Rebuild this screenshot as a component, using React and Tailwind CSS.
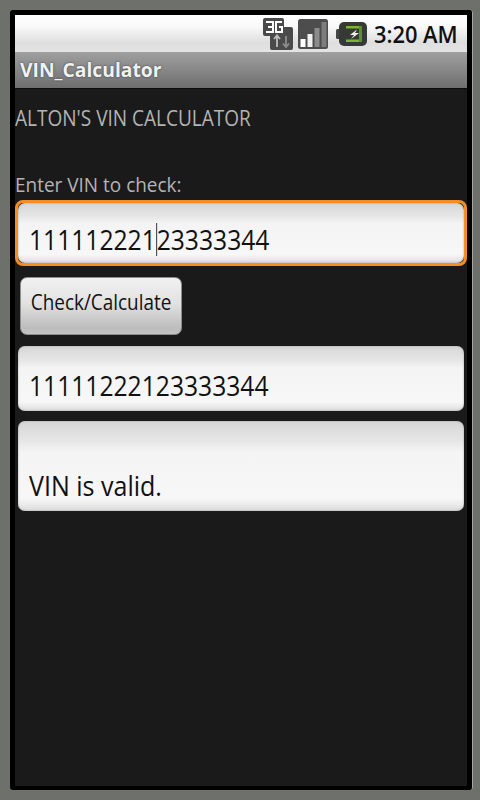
const font = { fontFamily: '"Open Sans","Noto Sans",sans-serif' };

function ThreeG() {
  return (
    <svg width="32" height="34" viewBox="0 0 32 34" className="block">
      <path d="M1 3a2 2 0 0 1 2-2h17a2 2 0 0 1 2 2v7h7a2 2 0 0 1 2 2v19a2 2 0 0 1-2 2H10a2 2 0 0 1-2-2V19H3a2 2 0 0 1-2-2z" fill="#4a4a4a" />
      <path d="M4 5h7v10H4M6 10h5" fill="none" stroke="#fff" strokeWidth="2" />
      <path d="M20 5h-6v10h6v-5h-3" fill="none" stroke="#fff" strokeWidth="2" />
      <path d="M15 30v-11M12 22l3-3.500 3 3.500" fill="none" stroke="#bdbdbd" strokeWidth="1.800" />
      <path d="M24 19v11M21 26.500l3 3.500 3-3.500" fill="none" stroke="#8d8d8d" strokeWidth="1.800" />
    </svg>
  );
}

function Signal() {
  return (
    <svg width="32" height="32" viewBox="0 0 32 32" className="block">
      <rect x="1" y="1" width="30" height="30" rx="2.500" fill="#4d4d4d" />
      <rect x="3.500" y="21" width="5" height="8" fill="#fff" />
      <rect x="10.500" y="16" width="5" height="13" fill="#f2f2f2" />
      <rect x="17.500" y="10" width="5" height="19" fill="#8b8b8b" />
      <rect x="24.500" y="4" width="5" height="25" fill="#7d7d7d" />
    </svg>
  );
}

function Battery() {
  return (
    <svg width="31" height="26" viewBox="0 0 31 26" className="block">
      <rect x="0" y="8" width="4" height="10" rx="1.500" fill="#444" />
      <rect x="3" y="1" width="28" height="24" rx="5" fill="#353a36" />
      <path d="M10 5h15v2.500H10zM10 18.500h15V21H10z" fill="#7fb235" />
      <path d="M23 5h3v16h-3z" fill="#5f8f2b" />
      <path d="M21 8.500l-7 5.500h4l-3 4 8-6h-4l2-3.500z" fill="#f4f4f4" />
    </svg>
  );
}

const fieldBg = "rounded-[7px] bg-[linear-gradient(#d6d6d6_0,#e6e6e6_22%,#f4f4f5_34%,#f7f7f8_86%,#e8e8e8_94%,#dadada_100%)] shadow-[inset_0_0_2px_#9a9a9a]";

export default function App() {
  return (
    <div style={font} className="h-[800px] w-[480px] overflow-hidden bg-[#6e706b] pl-[10px] pt-[10px]">
      <div className="h-[780px] w-[463px] rounded-[3px] border-r border-r-[#a5a7a3] bg-black pb-[4px] pl-[5px] pr-[5px] pt-[5px]">
        <div className="flex h-[771px] w-[452px] flex-col bg-[#1a1a1a]">
          <div className="flex h-[37px] shrink-0 items-center justify-end bg-[linear-gradient(#ffffff_0,#fafafa_30%,#dedede_75%,#e4e4e4_100%)]">
            <div className="mr-[3px]"><ThreeG /></div>
            <div className="mr-[7px]"><Signal /></div>
            <div className="mr-[7px]"><Battery /></div>
            <span className="mr-[10px] w-[83px] whitespace-nowrap text-[24px] font-semibold leading-[32px] text-[#111]">
              <span className="inline-block origin-left scale-x-[0.91]">3:20 AM</span>
            </span>
          </div>
          <div className="flex h-[36px] shrink-0 items-center bg-[linear-gradient(#a0a0a0,#6e6e6e)] pl-[5px] text-[19.300px] font-bold text-[#f2f2f2] [text-shadow:0_0_2px_#333]">
            VIN_Calculator
          </div>
          <div className="h-[1px] shrink-0 bg-[#0c0c0c]" />
          <div className="flex flex-col">
            <div className="mt-[14px] whitespace-nowrap text-[22px] leading-[28px] text-[#b4b4b4]">
              <span className="inline-block origin-left scale-x-[0.865]">ALTON'S VIN CALCULATOR</span>
            </div>
            <div className="mt-[40px] whitespace-nowrap text-[20.500px] leading-[26px] text-[#b4b4b4]">
              <span className="inline-block origin-left scale-x-[0.925]">Enter VIN to check:</span>
            </div>
            <div className="mt-[3px] rounded-[8px] border-[3px] border-[#f78d20]">
              <div className={`flex h-[60px] items-center whitespace-nowrap pl-[11px] pt-[13px] text-[27.500px] leading-[36px] text-[#111] ${fieldBg}`}>
                <span className="inline-flex origin-left scale-x-[0.896] items-center">
                  <span>111112221</span>
                  <span className="h-[33px] w-[1px] bg-[#222]" />
                  <span>23333344</span>
                </span>
              </div>
            </div>
            <button className="ml-[5px] mt-[11px] flex h-[58px] w-[162px] items-center justify-center rounded-[7px] border border-[#8d8d8d] bg-[linear-gradient(#f1f1f1,#e2e2e2_45%,#bcbcbc_90%,#c5c5c5)] pb-[6px] text-[21px] text-[#111]">
              <span className="inline-block scale-x-[0.9] whitespace-nowrap">Check/Calculate</span>
            </button>
            <div className={`ml-[3px] mr-[3px] mt-[11px] flex h-[65px] items-center whitespace-nowrap pl-[11px] pt-[14px] text-[27.500px] leading-[36px] text-[#111] ${fieldBg}`}>
              <span className="inline-block origin-left scale-x-[0.896]">11111222123333344</span>
            </div>
            <div className={`ml-[3px] mr-[3px] mt-[10px] flex h-[90px] items-end whitespace-nowrap pb-[7px] pl-[11px] text-[27.500px] leading-[36px] text-[#111] ${fieldBg}`}>
              <span className="inline-block origin-left scale-x-[0.91]">VIN is valid.</span>
            </div>
          </div>
        </div>
      </div>
    </div>
  );
}
